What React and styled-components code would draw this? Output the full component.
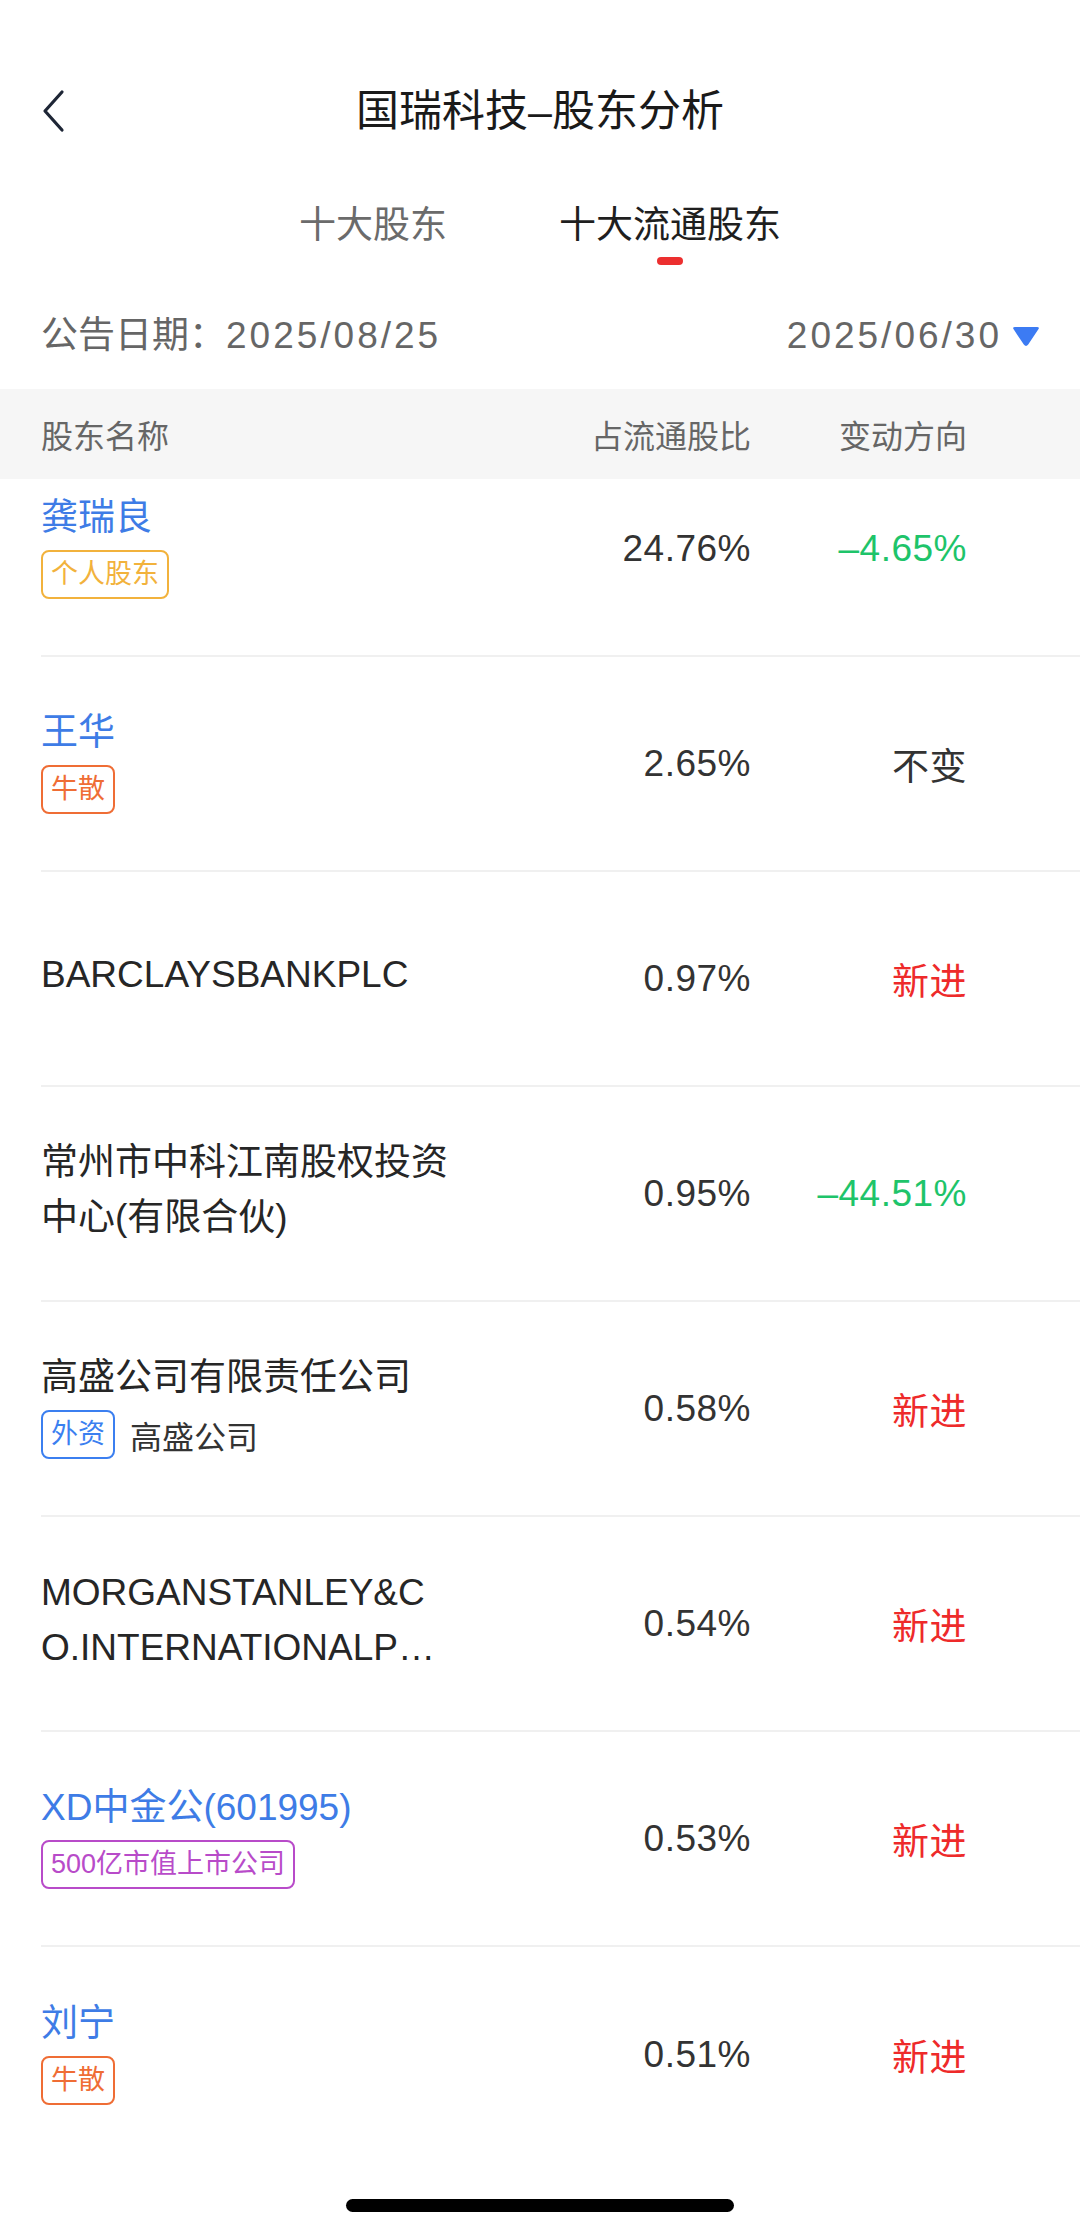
import React from "react";
import styled, { createGlobalStyle } from "styled-components";

const GlobalStyle = createGlobalStyle`
  body {
    margin: 0;
    background: #fff;
    font-family: "Liberation Sans", "Noto Sans CJK SC", sans-serif;
    color: #262626;
  }
`;

const Page = styled.div`
  width: 1080px;
  height: 2234px;
  display: flex;
  flex-direction: column;
  overflow: hidden;
  background: #fff;
`;

const NavBar = styled.div`
  height: 178px;
  box-sizing: border-box;
  padding-top: 44px;
  display: grid;
  grid-template-columns: 1fr auto 1fr;
  align-items: center;
`;

const BackBtn = styled.div`
  padding-left: 41px;
  display: flex;
  align-items: center;
  svg {
    display: block;
  }
`;

const Title = styled.div`
  font-size: 43px;
  line-height: 60px;
  color: #1a1a1a;
  white-space: nowrap;
`;

const Tabs = styled.div`
  display: flex;
  justify-content: center;
  gap: 112px;
  padding-top: 23px;
`;

const Tab = styled.div`
  display: flex;
  flex-direction: column;
  align-items: center;
  font-size: 37px;
  line-height: 50px;
  color: ${(p) => (p.$active ? "#1f1f1f" : "#6b6b6b")};
  &::after {
    content: "";
    margin-top: 6px;
    width: 26px;
    height: 8px;
    border-radius: 4px;
    background: ${(p) => (p.$active ? "#ec2f2f" : "transparent")};
  }
`;

const DateRow = styled.div`
  height: 124px;
  box-sizing: border-box;
  padding: 46px 40px 0 41px;
  display: flex;
  justify-content: space-between;
  align-items: flex-start;
  font-size: 37px;
  line-height: 50px;
  color: #666;
`;

const Digits = styled.span`
  letter-spacing: 3px;
`;

const Picker = styled.div`
  display: flex;
  align-items: center;
  gap: 10px;
`;

const HeaderRow = styled.div`
  height: 90px;
  background: #f6f6f6;
  display: grid;
  grid-template-columns: 1fr 200px 216px;
  align-items: center;
  padding: 0 113px 0 41px;
  font-size: 32px;
  color: #666;
  position: relative;
  z-index: 1;
`;

const HeadCell = styled.div`
  text-align: ${(p) => (p.$right ? "right" : "left")};
`;

const ListView = styled.div`
  flex: 1;
  overflow: hidden;
`;

const List = styled.div`
  margin-top: -37px;
`;

const Row = styled.div`
  height: 215px;
  box-sizing: border-box;
  margin-left: 41px;
  padding-right: 113px;
  display: grid;
  grid-template-columns: 1fr 200px 216px;
  align-items: center;
  border-bottom: ${(p) => (p.$last ? "none" : "2px solid #f0f0f0")};
`;

const NameCell = styled.div`
  display: flex;
  flex-direction: column;
  align-items: flex-start;
  padding-bottom: 8px;
`;

const Name = styled.div`
  max-width: 412px;
  font-size: 37px;
  line-height: 55px;
  color: ${(p) => (p.$link ? "#3e7ce6" : "#262626")};
  word-break: break-all;
  display: -webkit-box;
  -webkit-line-clamp: 2;
  -webkit-box-orient: vertical;
  overflow: hidden;
`;

const TagLine = styled.div`
  display: flex;
  align-items: center;
  gap: 15px;
  margin-top: 5px;
`;

const Tag = styled.span`
  display: inline-block;
  height: 49px;
  box-sizing: border-box;
  padding: 0 8px;
  border: 2px solid ${(p) => p.$color};
  border-radius: 8px;
  color: ${(p) => p.$color};
  font-size: 27px;
  line-height: 45px;
  white-space: nowrap;
`;

const SubName = styled.span`
  font-size: 32px;
  color: #333;
`;

const Pct = styled.div`
  text-align: right;
  font-size: 37px;
  letter-spacing: 0.5px;
  color: #333;
`;

const Change = styled.div`
  text-align: right;
  font-size: 37px;
  letter-spacing: 0.5px;
  color: ${(p) => p.$color};
`;

const HomeWrap = styled.div`
  display: flex;
  justify-content: center;
  padding: 0 0 22px;
`;

const HomeBar = styled.div`
  width: 388px;
  height: 13px;
  border-radius: 7px;
  background: #000;
`;

const tagColors = {
  amber: "#f2b23c",
  orange: "#ef6d35",
  blue: "#3b7ff0",
  purple: "#b84bc9",
};

const changeColors = {
  down: "#1ec46a",
  up: "#ee2a2a",
  flat: "#333",
};

const holders = [
  { name: "龚瑞良", link: true, tag: "个人股东", tagColor: "amber", pct: "24.76%", change: "–4.65%", dir: "down" },
  { name: "王华", link: true, tag: "牛散", tagColor: "orange", pct: "2.65%", change: "不变", dir: "flat" },
  { name: "BARCLAYSBANKPLC", pct: "0.97%", change: "新进", dir: "up" },
  { name: "常州市中科江南股权投资中心(有限合伙)", pct: "0.95%", change: "–44.51%", dir: "down" },
  { name: "高盛公司有限责任公司", tag: "外资", tagColor: "blue", sub: "高盛公司", pct: "0.58%", change: "新进", dir: "up" },
  { name: "MORGANSTANLEY&CO.INTERNATIONALPLC.", pct: "0.54%", change: "新进", dir: "up" },
  { name: "XD中金公(601995)", link: true, tag: "500亿市值上市公司", tagColor: "purple", pct: "0.53%", change: "新进", dir: "up" },
  { name: "刘宁", link: true, tag: "牛散", tagColor: "orange", pct: "0.51%", change: "新进", dir: "up" },
];

function ChevronLeft() {
  return (
    <svg width="26" height="44" viewBox="0 0 26 44" fill="none">
      <path d="M21 3 L4 22 L21 41" stroke="#1e2636" strokeWidth="3.2" strokeLinecap="round" strokeLinejoin="round" />
    </svg>
  );
}

function Caret() {
  return (
    <svg width="28" height="21" viewBox="0 0 28 21">
      <path d="M3 1 H25 Q28 1 26.2 3.6 L16.2 18.6 Q14 21.4 11.8 18.6 L1.8 3.6 Q0 1 3 1 Z" fill="#3c7bf3" />
    </svg>
  );
}

export default function App() {
  return (
    <Page>
      <GlobalStyle />
      <NavBar>
        <BackBtn>
          <ChevronLeft />
        </BackBtn>
        <Title>国瑞科技–股东分析</Title>
        <div />
      </NavBar>

      <Tabs>
        <Tab>十大股东</Tab>
        <Tab $active>十大流通股东</Tab>
      </Tabs>

      <DateRow>
        <div>
          公告日期：<Digits>2025/08/25</Digits>
        </div>
        <Picker>
          <Digits>2025/06/30</Digits>
          <Caret />
        </Picker>
      </DateRow>

      <HeaderRow>
        <HeadCell>股东名称</HeadCell>
        <HeadCell $right>占流通股比</HeadCell>
        <HeadCell $right>变动方向</HeadCell>
      </HeaderRow>

      <ListView>
        <List>
          {holders.map((h, i) => (
            <Row key={h.name} $last={i === holders.length - 1}>
              <NameCell>
                <Name $link={h.link}>{h.name}</Name>
                {h.tag && (
                  <TagLine>
                    <Tag $color={tagColors[h.tagColor]}>{h.tag}</Tag>
                    {h.sub && <SubName>{h.sub}</SubName>}
                  </TagLine>
                )}
              </NameCell>
              <Pct>{h.pct}</Pct>
              <Change $color={changeColors[h.dir]}>{h.change}</Change>
            </Row>
          ))}
        </List>
      </ListView>

      <HomeWrap>
        <HomeBar />
      </HomeWrap>
    </Page>
  );
}
